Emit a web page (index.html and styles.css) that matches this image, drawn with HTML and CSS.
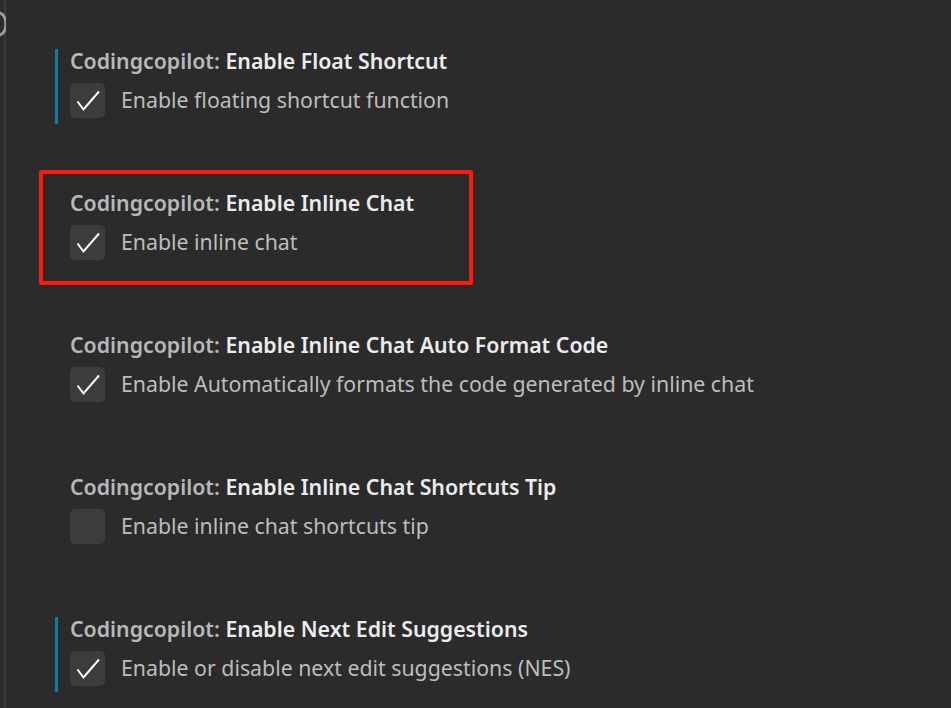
FILE: index.html
```html
<!DOCTYPE html>
<html>
<head>
<meta charset="utf-8">
<link rel="stylesheet" href="styles.css">
</head>
<body>
<div class="page">
  <div class="edge">
    <svg class="edge-glyph" width="6" height="26" viewBox="0 0 6 26"><path d="M-1 2 A 7 11 0 0 1 -1 24" fill="none" stroke="#9a9a9a" stroke-width="3"/></svg>
  </div>
  <div class="list">
    <div class="item modified">
      <div class="title"><span class="cat">Codingcopilot: </span><span class="name">Enable Float Shortcut</span></div>
      <div class="row">
        <span class="box checked"><svg width="35" height="35" viewBox="0 0 35 35"><path d="M7.5 18.5 L13.5 26.5 L29 8.5" fill="none" stroke="#ffffff" stroke-width="2"/></svg></span>
        <span class="desc">Enable floating shortcut function</span>
      </div>
    </div>
    <div class="item highlight">
      <div class="title"><span class="cat">Codingcopilot: </span><span class="name">Enable Inline Chat</span></div>
      <div class="row">
        <span class="box checked"><svg width="35" height="35" viewBox="0 0 35 35"><path d="M7.5 18.5 L13.5 26.5 L29 8.5" fill="none" stroke="#ffffff" stroke-width="2"/></svg></span>
        <span class="desc">Enable inline chat</span>
      </div>
    </div>
    <div class="item">
      <div class="title"><span class="cat">Codingcopilot: </span><span class="name">Enable Inline Chat Auto Format Code</span></div>
      <div class="row">
        <span class="box checked"><svg width="35" height="35" viewBox="0 0 35 35"><path d="M7.5 18.5 L13.5 26.5 L29 8.5" fill="none" stroke="#ffffff" stroke-width="2"/></svg></span>
        <span class="desc">Enable Automatically formats the code generated by inline chat</span>
      </div>
    </div>
    <div class="item">
      <div class="title"><span class="cat">Codingcopilot: </span><span class="name">Enable Inline Chat Shortcuts Tip</span></div>
      <div class="row">
        <span class="box"></span>
        <span class="desc">Enable inline chat shortcuts tip</span>
      </div>
    </div>
    <div class="item modified">
      <div class="title"><span class="cat">Codingcopilot: </span><span class="name">Enable Next Edit Suggestions</span></div>
      <div class="row">
        <span class="box checked"><svg width="35" height="35" viewBox="0 0 35 35"><path d="M7.5 18.5 L13.5 26.5 L29 8.5" fill="none" stroke="#ffffff" stroke-width="2"/></svg></span>
        <span class="desc">Enable or disable next edit suggestions (NES)</span>
      </div>
    </div>
  </div>
</div>
</body>
</html>
```
FILE: styles.css
```css
html, body {
  margin: 0;
  padding: 0;
  background: #2b2b2b;
  height: 100%;
  overflow: hidden;
}
body {
  font-family: "Noto Sans", "Open Sans", sans-serif;
  color: #cccccc;
}
.page {
  display: flex;
  height: 708px;
}
.edge {
  width: 4px;
  border-right: 2px solid #3a3a3a;
  position: relative;
  flex: none;
}
.edge-glyph {
  position: absolute;
  left: 0;
  top: 11px;
}
.list {
  display: flex;
  flex-direction: column;
  gap: 67px;
  padding: 49px 0 0 49px;
}
.item {
  position: relative;
  height: 75px;
  border-left: 3px solid transparent;
  padding-left: 12px;
  box-sizing: border-box;
  display: flex;
  flex-direction: column;
}
.item.modified {
  border-left-color: #0c7d9d;
}
.item.highlight::after {
  content: "";
  position: absolute;
  left: -19px;
  top: -21px;
  width: 426px;
  height: 107px;
  border: 4px solid #ff1a0f;
  border-radius: 2px;
}
.title {
  font-size: 21.3px;
  line-height: 26px;
  margin-top: -1px;
  white-space: nowrap;
}
.cat {
  color: #b8b8b8;
  font-weight: 600;
}
.name {
  color: #ececec;
  font-weight: 600;
}
.row {
  display: flex;
  align-items: center;
  gap: 16px;
  margin-top: 9px;
}
.box {
  width: 35px;
  height: 35px;
  border-radius: 5px;
  background: #3c3c3c;
  display: block;
  flex: none;
}
.box svg {
  display: block;
}
.desc {
  font-size: 21.3px;
  line-height: 30px;
  margin-top: -2px;
  color: #bdbdbd;
  white-space: nowrap;
}
```
